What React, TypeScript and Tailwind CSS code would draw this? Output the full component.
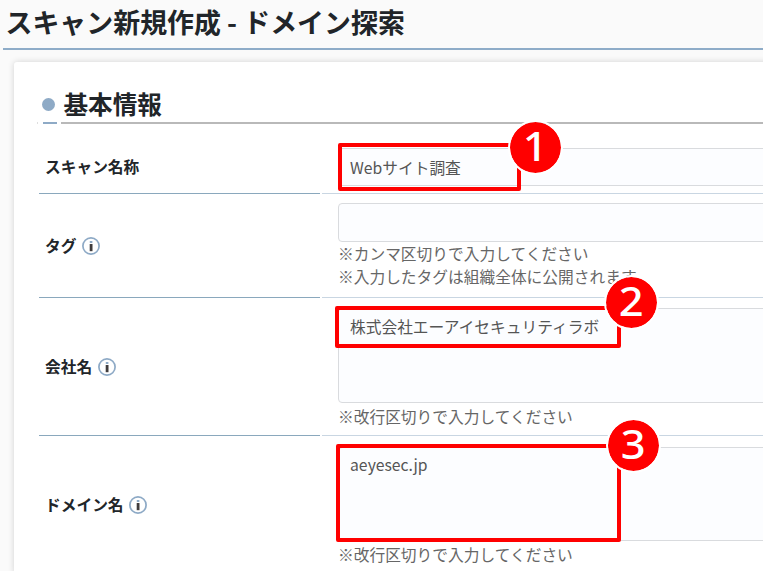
import React from "react";

interface FieldRowProps {
  label: string;
  hint?: boolean;
  className: string;
  children: React.ReactNode;
}

function InfoIcon() {
  return (
    <svg className="ml-[5.5px] h-[18px] w-[18px] shrink-0" viewBox="0 0 18 18">
      <circle cx="9" cy="9" r="8.1" fill="#fff" stroke="#8eaac6" strokeWidth="1.7" />
      <rect x="7.7" y="3.9" width="2.8" height="2" rx="0.6" fill="#8eaac6" />
      <rect x="7.7" y="7" width="2.8" height="7.2" fill="#403c3c" />
    </svg>
  );
}

function FieldRow({ label, hint, className, children }: FieldRowProps) {
  return (
    <div className={`flex shrink-0 gap-[2px] ${className}`}>
      <div className="flex w-[281px] shrink-0 items-center border-b border-[#8aa8bd] pl-[6px] font-bold text-[#212529]">
        <span>{label}</span>
        {hint && <InfoIcon />}
      </div>
      <div className="flex-1 border-b border-[#c9d6e2] pl-4 text-[#555]">{children}</div>
    </div>
  );
}

function Note({ children }: { children: React.ReactNode }) {
  return <p className="leading-[23px] text-[#666]">{children}</p>;
}

interface MarkerProps {
  num: number;
  box: string;
  badge: string;
}

// Red frame and numbered badge laid over the form
function Marker({ num, box, badge }: MarkerProps) {
  return (
    <>
      <div className={`absolute rounded-[2px] border-4 border-[#ff0000] ${box}`} />
      <div
        className={`absolute flex h-[55px] w-[55px] items-center justify-center rounded-full border-[2.25px] border-white bg-[#ff0000] bg-clip-padding font-['Noto_Sans',sans-serif] text-[39.5px] leading-none font-medium text-white ${badge}`}
      >
        <span className="scale-x-110 pb-px">{num}</span>
      </div>
    </>
  );
}

export default function App() {
  return (
    <div className="relative flex h-[571px] w-[763px] flex-col overflow-hidden bg-[#fafafa] font-['Noto_Sans_CJK_JP','Noto_Sans',sans-serif] text-[15.72px] text-[#212529]">
      <h1 className="ml-[3px] h-[50px] shrink-0 border-b-2 border-[#8eacc8] pl-[2.5px] text-[26.95px] leading-[44px] font-bold whitespace-nowrap">
        スキャン新規作成 - ドメイン探索
      </h1>

      <main className="mt-3 -mr-2 ml-[14px] flex flex-1 flex-col rounded-[3px] bg-white pr-2 pl-[25px] shadow-[0_0_6px_rgba(0,0,0,0.16)]">
        <h2 className="flex h-[60px] shrink-0 items-end pl-[3px] text-[24.6px] leading-[35px] font-bold">
          <span className="mr-[8.5px] mb-[11px] h-[13px] w-[13px] rounded-full bg-[#8eaac6]" />
          <span className="pb-px">基本情報</span>
        </h2>
        <div className="-ml-[2px] flex h-[2px] shrink-0">
          <span className="w-px bg-[#dedede]" />
          <span className="ml-[5px] w-[14px] bg-[#8eaac6]" />
          <span className="ml-[4px] flex-1 bg-[#b9b9b9]" />
        </div>

        <FieldRow label="スキャン名称" className="h-[70px] [&>div:first-child]:pt-[17px]">
          <div className="mt-6 -mr-2 h-[38px] rounded-[4px] border border-[#d9dbde] bg-[#fcfdff] pl-[11px] leading-[38px]">
            Webサイト調査
          </div>
        </FieldRow>
        <FieldRow label="タグ" hint className="h-[104px]">
          <div className="mt-[9px] -mr-2 h-[39px] rounded-[4px] border border-[#d9dbde] bg-[#fcfdff]" />
          <Note>※カンマ区切りで入力してください</Note>
          <Note>※入力したタグは組織全体に公開されます</Note>
        </FieldRow>
        <FieldRow label="会社名" hint className="h-[138px]">
          <div className="mt-[10px] -mr-2 mb-[2px] h-[95px] rounded-[4px] border border-[#d9dbde] bg-[#fcfdff] pl-[11px] leading-[36px]">
            株式会社エーアイセキュリティラボ
          </div>
          <Note>※改行区切りで入力してください</Note>
        </FieldRow>
        <FieldRow label="ドメイン名" hint className="h-[138px] [&>div:first-child]:pt-px">
          <div className="mt-[11px] -mr-2 mb-[2px] h-[94px] rounded-[4px] border border-[#d9dbde] bg-[#fcfdff] pl-[11px] leading-[34px]">
            aeyesec.jp
          </div>
          <Note>※改行区切りで入力してください</Note>
        </FieldRow>
      </main>

      <Marker num={1} box="left-[338px] top-[143px] h-[48px] w-[183px]" badge="left-[508px] top-[120px]" />
      <Marker num={2} box="left-[335px] top-[306px] h-[42px] w-[286px]" badge="left-[604px] top-[275px]" />
      <Marker num={3} box="left-[336px] top-[444px] h-[98px] w-[285px]" badge="left-[606px] top-[418px]" />
    </div>
  );
}
